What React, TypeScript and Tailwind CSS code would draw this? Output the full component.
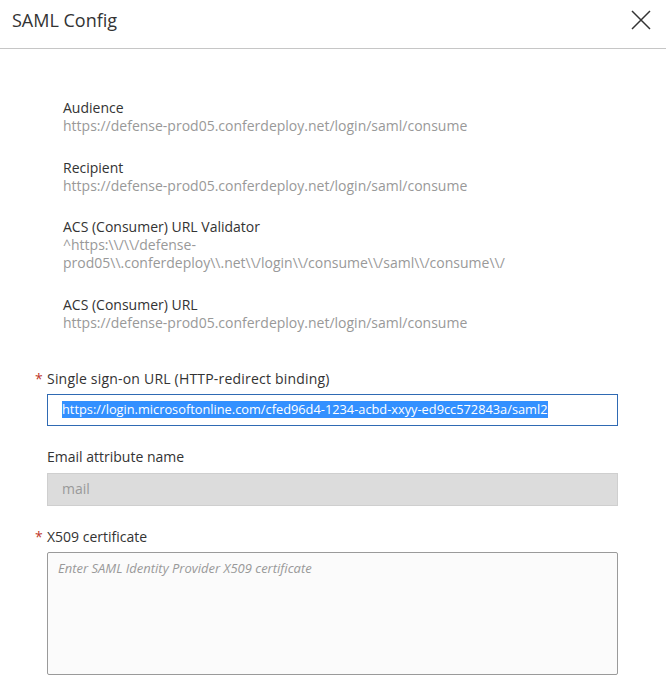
import React from "react";

const font = { fontFamily: '"Open Sans", "Noto Sans", sans-serif' };

const infoRows: { label: string; value: string[] }[] = [
  {
    label: "Audience",
    value: ["https://defense-prod05.conferdeploy.net/login/saml/consume"],
  },
  {
    label: "Recipient",
    value: ["https://defense-prod05.conferdeploy.net/login/saml/consume"],
  },
  {
    label: "ACS (Consumer) URL Validator",
    value: [
      "^https:\\\\/\\\\/defense-",
      "prod05\\\\.conferdeploy\\\\.net\\\\/login\\\\/consume\\\\/saml\\\\/consume\\\\/",
    ],
  },
  {
    label: "ACS (Consumer) URL",
    value: ["https://defense-prod05.conferdeploy.net/login/saml/consume"],
  },
];

function CloseIcon() {
  return (
    <svg width="20" height="20" viewBox="0 0 20 20" fill="none">
      <path d="M1 1L19 19M19 1L1 19" stroke="#333" strokeWidth="1.5" />
    </svg>
  );
}

function Required() {
  return <span className="w-[12px] text-[#c0392b] text-[14px]">*</span>;
}

export default function App() {
  return (
    <div className="w-[666px] h-[693px] bg-white overflow-hidden text-[#333]" style={font}>
      <div className="h-[49px] border-b border-[#c6c6c6] flex items-center justify-between pl-[12px] pr-[15px]">
        <h1 className="text-[18px] leading-[24px] text-[#333] -mt-[8px]">SAML Config</h1>
        <button className="-mt-[9px] ml-auto">
          <CloseIcon />
        </button>
      </div>

      <div className="pt-[50px] pl-[63px] flex flex-col gap-[23.5px]">
        {infoRows.map((row) => (
          <div key={row.label} className="flex flex-col text-[14px] leading-[18px]">
            <span className="text-[#333]">{row.label}</span>
            {row.value.map((v) => (
              <span key={v} className="text-[#999]">
                {v}
              </span>
            ))}
          </div>
        ))}
      </div>

      <div className="pt-[38px] pl-[35px] pr-[48px] flex flex-col text-[14px] leading-[18px]">
        <label className="flex items-center">
          <Required />
          <span className="tracking-[0.2px]">Single sign-on URL (HTTP-redirect binding)</span>
        </label>
        <div className="mt-[6px] ml-[12px] h-[32px] border border-[#2f6ab3] bg-white flex items-center pl-[14px]">
          <span className="bg-[#3390ff] text-white text-[12.8px] leading-[17px]">
            https://login.microsoftonline.com/cfed96d4-1234-acbd-xxyy-ed9cc572843a/saml2
          </span>
        </div>

        <label className="mt-[22px] ml-[12px]">Email attribute name</label>
        <div className="mt-[7px] ml-[12px] h-[33px] border border-[#cfcfcf] bg-[#dcdcdc] flex items-center pl-[14px] text-[#999]">
          mail
        </div>

        <label className="mt-[22px] flex items-center">
          <Required />
          <span>X509 certificate</span>
        </label>
        <div className="mt-[6px] ml-[12px] h-[123px] border border-[#9a9a9a] rounded-[2px] bg-[#fbfbfb] pl-[10px] pt-[6px]">
          <span className="italic text-[#999] text-[13px]">Enter SAML Identity Provider X509 certificate</span>
        </div>
      </div>
    </div>
  );
}
